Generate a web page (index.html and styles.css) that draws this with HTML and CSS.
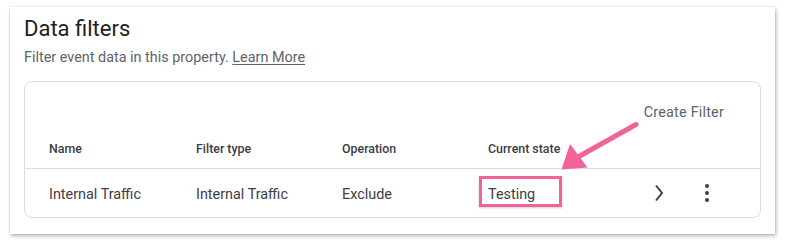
FILE: index.html
```html
<!DOCTYPE html>
<html>
<head>
<meta charset="utf-8">
<link rel="stylesheet" href="styles.css">
</head>
<body>
<div class="page">
  <section class="card">
    <h1 class="title">Data filters</h1>
    <p class="subtitle">Filter event data in this property. <a class="link">Learn More</a></p>
    <div class="table-card">
      <div class="toolbar"><span class="create">Create Filter</span></div>
      <div class="row head">
        <div class="cell">Name</div>
        <div class="cell">Filter type</div>
        <div class="cell">Operation</div>
        <div class="cell">Current state</div>
      </div>
      <div class="row data">
        <div class="cell">Internal Traffic</div>
        <div class="cell">Internal Traffic</div>
        <div class="cell">Exclude</div>
        <div class="cell">Testing</div>
        <div class="actions">
          <svg class="icon" viewBox="0 0 24 24" width="24" height="24"><polyline points="9,4.5 15,12 9,19.5" fill="none" stroke="#3c4043" stroke-width="2"/></svg>
          <svg class="icon" viewBox="0 0 24 24" width="24" height="24"><circle cx="12" cy="5" r="2" fill="#3c4043"/><circle cx="12" cy="12" r="2" fill="#3c4043"/><circle cx="12" cy="19" r="2" fill="#3c4043"/></svg>
        </div>
      </div>
    </div>
  </section>
  <div class="highlight"></div>
  <svg class="arrow" width="789" height="244" viewBox="0 0 789 244">
    <line x1="636" y1="124.5" x2="577" y2="157.5" stroke="#f2639b" stroke-width="5" stroke-linecap="round"/>
    <polygon points="561.5,169.5 570,144 587.5,167.5" fill="#f2639b"/>
  </svg>
</div>
</body>
</html>
```

FILE: styles.css
```css
* { box-sizing: border-box; }
html, body { margin: 0; padding: 0; background: #ffffff; }
body { font-family: Roboto, "Noto Sans", sans-serif; color: #3c4043; }
.page { position: relative; width: 789px; height: 244px; padding: 7px 14px 0 10px; }
.card {
  width: 765px;
  height: 227px;
  background: #fff;
  box-shadow: 1px 2px 4px rgba(0,0,0,0.28), 0 0 2px rgba(0,0,0,0.12);
  padding: 9px 14px 16px 14px;
}
.title { margin: 0; font-size: 22px; font-weight: 400; line-height: 26px; color: #202124; }
.subtitle { margin: 6px 0 0 0; font-size: 14.4px; line-height: 20px; color: #5f6368; }
.link { color: #5f6368; text-decoration: underline; text-underline-offset: 2px; }
.table-card {
  margin-top: 13px;
  height: 137px;
  border: 1px solid #dadce0;
  border-radius: 8px;
}
.toolbar { height: 47px; display: flex; justify-content: flex-end; padding: 22px 36px 0 0; }
.create { font-size: 14.4px; line-height: 18px; color: #5f6368; letter-spacing: 0.2px; }
.row { display: grid; grid-template-columns: 147px 146px 146px 146px 1fr; padding-left: 24px; align-items: center; }
.head { height: 40px; border-bottom: 1px solid #dadce0; font-size: 12.4px; font-weight: 500; color: #3c4043; padding-bottom: 1px; }
.data { height: 47px; font-size: 14.4px; color: #3c4043; padding-top: 4px; }
.actions { display: flex; gap: 24px; padding-left: 13px; margin-top: -3px; }
.icon { display: block; }
.highlight {
  position: absolute;
  left: 479px; top: 176px;
  width: 83px; height: 31px;
  border: 3px solid #f2639b;
  box-shadow: 0 1px 2px rgba(0,0,0,0.2);
}
.arrow { position: absolute; left: 0; top: 0; }
```
